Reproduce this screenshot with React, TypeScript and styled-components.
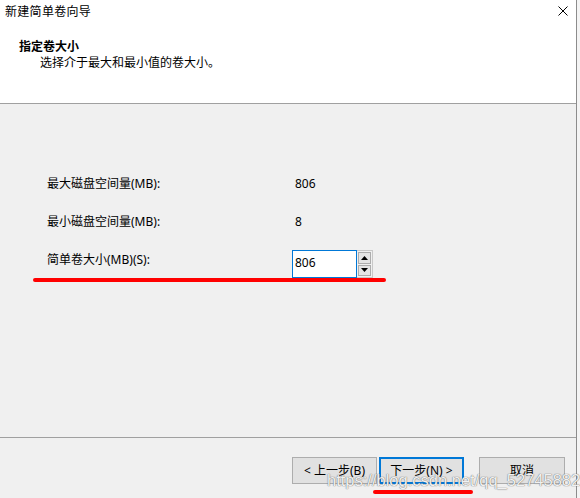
import React from "react";
import styled, { createGlobalStyle } from "styled-components";

const GlobalStyle = createGlobalStyle`
  html, body {
    margin: 0;
    padding: 0;
    background: #f4f4f4;
  }
  * { box-sizing: border-box; }
`;

const FONT = `"Noto Sans", "Noto Sans CJK SC", sans-serif`;

const Page = styled.div`
  position: relative;
  width: 580px;
  height: 498px;
  display: flex;
  overflow: hidden;
  font-family: ${FONT};
  font-size: 12px;
  color: #000;
`;

const Window = styled.div`
  width: 577px;
  height: 498px;
  display: flex;
  flex-direction: column;
  border-right: 1px solid #8c8c8c;
  background: #f0f0f0;
`;

const Header = styled.div`
  height: 104px;
  flex: none;
  background: #ffffff;
  border-bottom: 1px solid #a0a0a0;
`;

const TitleBar = styled.div`
  height: 24px;
  display: flex;
  align-items: center;
  justify-content: space-between;
  padding: 0 8px 0 5px;
`;

const Title = styled.span`
  line-height: 24px;
  font-size: 12px;
  letter-spacing: 0.3px;
`;

const CloseIcon = styled.svg`
  width: 10px;
  height: 10px;
  margin-bottom: 3px;
`;

const Heading = styled.div`
  margin: 15px 0 0 19px;
  line-height: 16px;
  font-weight: 700;
`;

const SubHeading = styled.div`
  margin-left: 40px;
  line-height: 16px;
`;

const Body = styled.div`
  flex: none;
  height: 334px;
  border-bottom: 1px solid #a0a0a0;
  padding: 68px 0 0 47px;
  display: flex;
  flex-direction: column;
  gap: 14px;
`;

const FieldRow = styled.div`
  display: flex;
  align-items: flex-start;
  height: 24px;
`;

const Label = styled.div`
  width: 245px;
  line-height: 24px;
`;

const Value = styled.div`
  padding-left: 3px;
  line-height: 24px;
`;

const SpinBox = styled.div`
  display: flex;
  margin-top: 2px;
`;

const NumberField = styled.div`
  width: 65px;
  height: 28px;
  background: #fff;
  border: 1px solid #0078d7;
  padding: 3px 0 0 2px;
  line-height: 18px;
`;

const SpinColumn = styled.div`
  width: 16px;
  height: 28px;
  display: flex;
  flex-direction: column;
  gap: 1px;
  border: 1px solid #c8c8c8;
  border-left: none;
  background: #f0f0f0;
  padding: 1px;
`;

const SpinButton = styled.div`
  flex: 1;
  display: flex;
  align-items: center;
  justify-content: center;
  background: #e5e5e5;
  border: 1px solid #adadad;
`;

const Footer = styled.div`
  flex: 1;
  display: flex;
  justify-content: flex-end;
  align-items: flex-start;
  padding: 19px 11px 0 0;
`;

const Button = styled.div<{ $primary?: boolean; $w: number; $ml: number }>`
  width: ${(p) => p.$w}px;
  height: 27px;
  margin-left: ${(p) => p.$ml}px;
  display: flex;
  align-items: center;
  justify-content: center;
  background: #e1e1e1;
  border: 1px solid ${(p) => (p.$primary ? "#0078d7" : "#adadad")};
  box-shadow: ${(p) => (p.$primary ? "inset 0 0 0 1px #0078d7" : "none")};
  line-height: 16px;
`;

const Mark = styled.div<{ $x: number; $y: number; $w: number }>`
  position: absolute;
  left: ${(p) => p.$x}px;
  top: ${(p) => p.$y}px;
  width: ${(p) => p.$w}px;
  height: 4px;
  border-radius: 2px;
  background: #ff0000;
`;

const Watermark = styled.div`
  position: absolute;
  left: 327px;
  top: 471px;
  font-family: "Liberation Sans", Arial, sans-serif;
  font-size: 16.5px;
  line-height: 18px;
  color: rgba(255, 255, 255, 0.92);
  text-shadow: 0 0 1px rgba(90, 90, 90, 0.9), 0 0 1px rgba(90, 90, 90, 0.6);
  white-space: nowrap;
  pointer-events: none;
`;

const Triangle = ({ up }: { up?: boolean }) => (
  <svg width="7" height="4" viewBox="0 0 7 4">
    <path d={up ? "M0 4 L3.5 0 L7 4 Z" : "M0 0 L3.5 4 L7 0 Z"} fill="#000" />
  </svg>
);

export default function App() {
  return (
    <>
      <GlobalStyle />
      <Page>
        <Window>
          <Header>
            <TitleBar>
              <Title>新建简单卷向导</Title>
              <CloseIcon viewBox="0 0 10 10">
                <path d="M0.5 0.5 L9.5 9.5 M9.5 0.5 L0.5 9.5" stroke="#000" strokeWidth="1" />
              </CloseIcon>
            </TitleBar>
            <Heading>指定卷大小</Heading>
            <SubHeading>选择介于最大和最小值的卷大小。</SubHeading>
          </Header>
          <Body>
            <FieldRow>
              <Label>最大磁盘空间量(MB):</Label>
              <Value>806</Value>
            </FieldRow>
            <FieldRow>
              <Label>最小磁盘空间量(MB):</Label>
              <Value>8</Value>
            </FieldRow>
            <FieldRow>
              <Label>简单卷大小(MB)(S):</Label>
              <SpinBox>
                <NumberField>806</NumberField>
                <SpinColumn>
                  <SpinButton>
                    <Triangle up />
                  </SpinButton>
                  <SpinButton>
                    <Triangle />
                  </SpinButton>
                </SpinColumn>
              </SpinBox>
            </FieldRow>
          </Body>
          <Footer>
            <Button $w={85} $ml={0}>&lt; 上一步(B)</Button>
            <Button $w={85} $ml={2} $primary>下一步(N) &gt;</Button>
            <Button $w={86} $ml={15}>取消</Button>
          </Footer>
        </Window>
        <Mark $x={33} $y={278} $w={353} />
        <Mark $x={373} $y={490} $w={100} />
        <Watermark>https://blog.csdn.net/qq_52745882</Watermark>
      </Page>
    </>
  );
}
